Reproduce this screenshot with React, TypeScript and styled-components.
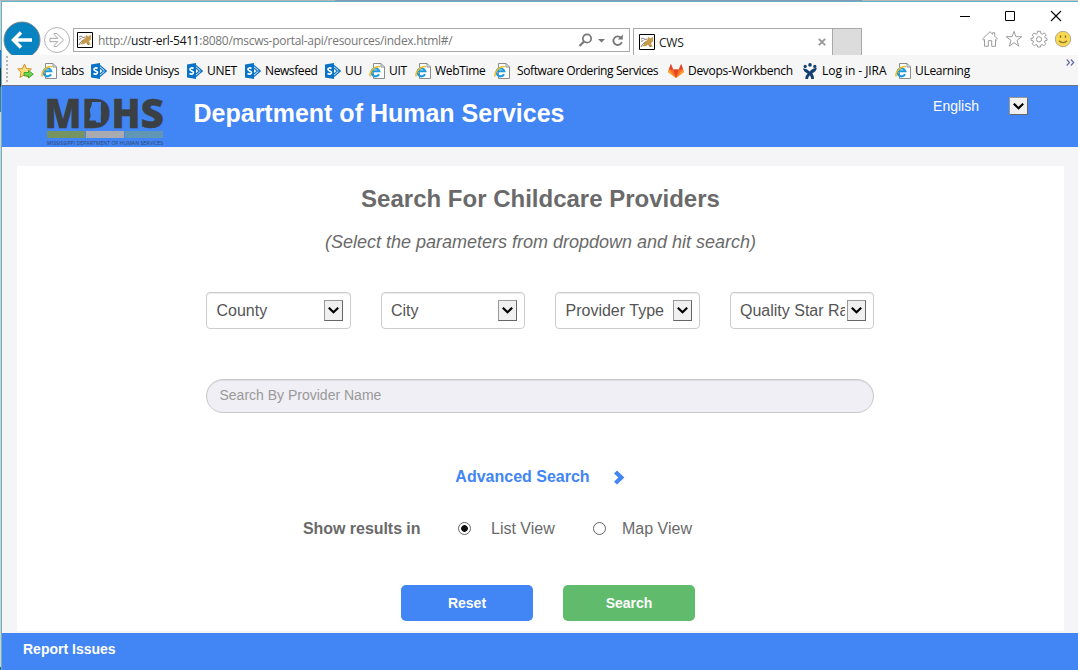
import React from 'react';
import styled, { createGlobalStyle } from 'styled-components';

const Global = createGlobalStyle`
  * { box-sizing: border-box; }
  body { margin: 0; overflow: hidden; font-family: "Liberation Sans", Arial, sans-serif; }
  svg { display: block; flex: none; }
`;

const Desktop = styled.div`
  width: 1078px;
  height: 670px;
  padding: 2px 0 0 2px;
  background:
    linear-gradient(#62b5c4, #62b5c4) 1px 1px / 1077px 1px no-repeat,
    linear-gradient(#62b5c4, #62b5c4) 1px 1px / 1px 669px no-repeat,
    linear-gradient(90deg, #aeb5ba 0 335px, #859ab5 335px 862px, #b5b5b5 862px 1000px, #c8c8c8 1000px) 0 0 / 1078px 1px no-repeat,
    linear-gradient(#ccd0d3 0 50px, #3c70d0 50px 68px, #333 68px 87px, #4774b5 87px 112px, #d3cfd0 112px 667px, #315aa0 667px) 0 0 / 1px 670px no-repeat;
`;
const BrowserWindow = styled.div`
  height: 668px;
  display: flex;
  flex-direction: column;
`;
const Chrome = styled.div`
  height: 53px;
  display: flex;
  background: #fff;
  overflow: hidden;
  font-family: "Open Sans", "Noto Sans", sans-serif;
`;
const NavButtons = styled.div`
  width: 71px;
  display: flex;
  padding-top: 19px;
`;
const AddressBar = styled.div`
  width: 557px;
  height: 24px;
  margin-top: 26px;
  border: 1px solid #a9a9a9;
  display: flex;
  align-items: center;
  padding: 0 5px 0 3px;
`;
const Url = styled.div`
  flex: 1;
  margin: 1px 0 0 5px;
  font-size: 12px;
  line-height: 22px;
  letter-spacing: -0.3px;
  color: #777;
  white-space: nowrap;
  b { font-weight: 400; color: #111; }
`;
const Tab = styled.div`
  width: 199px;
  height: 27px;
  margin: 26px 0 0 3px;
  border: solid #a9a9a9;
  border-width: 1px 0 0 1px;
  display: flex;
  align-items: center;
  padding: 0 6px 0 5px;
  font-size: 12px;
  color: #222;
`;
const TabTitle = styled.span`
  flex: 1;
  margin-left: 4px;
  letter-spacing: -0.2px;
`;
const NewTab = styled.div`
  width: 30px;
  height: 27px;
  margin-top: 26px;
  background: #dcdcdc;
  border: 1px solid #a9a9a9;
  border-bottom: 0;
`;
const WindowSide = styled.div`
  flex: 1;
  display: flex;
  flex-direction: column;
  align-items: flex-end;
`;
const WindowControls = styled.div`
  display: flex;
  gap: 33px;
  padding: 8px 16px 0 0;
`;
const Tools = styled.div`
  display: flex;
  gap: 6.5px;
  padding: 6px 6px 0 0;
`;

const Bookmarks = styled.div`
  height: 30px;
  background: #f6f6f6;
  display: flex;
  align-items: center;
  padding: 0 3px 0 4px;
  font-family: "Open Sans", "Noto Sans", sans-serif;
`;
const Grip = styled.div`
  width: 2px;
  height: 28px;
  margin-right: 9px;
  background: repeating-linear-gradient(#b4b4b4 0 2px, transparent 2px 4px);
`;
const Bookmark = styled.div<{ $w: number; $gap?: number; $ls?: number }>`
  width: ${p => p.$w}px;
  flex: none;
  display: flex;
  align-items: center;
  gap: ${p => p.$gap ?? 4}px;
  margin-top: 2px;
  font-size: 12px;
  line-height: 16px;
  letter-spacing: ${p => p.$ls ?? -0.3}px;
  white-space: nowrap;
  color: #000;
`;
const Overflow = styled.div`
  margin-left: auto;
  align-self: flex-start;
  padding-top: 4px;
`;

const Header = styled.header`
  height: 62px;
  border-top: 1px solid #687387;
  background: #4285f4;
  color: #fff;
  display: flex;
  padding-left: 44px;
`;
const Department = styled.h1`
  margin: 11px 0 0 28.5px;
  font-size: 25px;
  line-height: 32px;
  font-weight: 700;
  white-space: nowrap;
`;
const Language = styled.div`
  margin: 11px 50px 0 auto;
  display: flex;
  gap: 30px;
  font-size: 14px;
  line-height: 19px;
`;

const Page = styled.main`
  flex: 1;
  background: #f5f5f8;
  padding: 19px 14px 2px 15px;
`;
const Card = styled.section`
  height: 465px;
  background: #fff;
  display: flex;
  flex-direction: column;
  align-items: center;
  color: #6a6a6a;
`;
const Title = styled.h2`
  margin: 17px 0 0;
  font-size: 24px;
  line-height: 32px;
  font-weight: 700;
`;
const Subtitle = styled.p`
  margin: 15px 0 0;
  font-size: 18px;
  line-height: 24px;
  font-style: italic;
`;
const Filters = styled.div`
  width: 668px;
  margin: 38px 1px 0 0;
  display: grid;
  grid-template-columns: repeat(4, 1fr);
  gap: 30px;
`;
const Select = styled.div`
  height: 37px;
  min-width: 0;
  border: 1px solid #ccc;
  border-radius: 4px;
  box-shadow: inset 0 1px 1px rgba(0, 0, 0, 0.075);
  display: flex;
  align-items: center;
  padding: 0 7px 0 9.5px;
  font-size: 16px;
  color: #555;
`;
const SelectText = styled.span`
  flex: 1;
  overflow: hidden;
  white-space: nowrap;
  margin-right: 2px;
`;
const ArrowBox = styled.span<{ $h: number }>`
  width: 19px;
  height: ${p => p.$h}px;
  flex: none;
  display: flex;
  align-items: center;
  justify-content: center;
  background: #f0f0f0;
  border: 1px solid #777;
  border-color: #999 #666 #666 #999;
`;
const SearchField = styled.input`
  width: 668px;
  height: 34px;
  margin: 50px 1px 0 0;
  padding: 0 12px 2px 12.5px;
  border: 1px solid #c8c8ca;
  border-radius: 17px;
  background: #f0eff5;
  box-shadow: inset 0 1px 1px rgba(0, 0, 0, 0.075);
  font: 14px "Liberation Sans", Arial, sans-serif;
  &::placeholder { color: #999; opacity: 1; }
`;
const Advanced = styled.div`
  margin: 53px 1px 0 0;
  display: flex;
  align-items: center;
  gap: 23px;
  font-size: 16px;
  line-height: 22px;
  font-weight: 700;
  color: #4285f4;
`;
const Results = styled.div`
  align-self: flex-start;
  margin: 30px 0 0 286px;
  display: flex;
  align-items: center;
  font-size: 16px;
  line-height: 22px;
`;
const ResultsLabel = styled.strong`
  width: 155px;
  letter-spacing: -0.05px;
`;
const Option = styled.label<{ $w: number; $gap: number }>`
  width: ${p => p.$w}px;
  display: flex;
  align-items: center;
  gap: ${p => p.$gap}px;
  white-space: nowrap;
`;
const Radio = styled.span<{ $on?: boolean }>`
  width: 13px;
  height: 13px;
  flex: none;
  margin-top: -2px;
  border: 1px solid #666;
  border-radius: 50%;
  background: ${p => (p.$on ? 'radial-gradient(circle, #111 0 3px, #fff 3.7px)' : '#fff')};
`;
const Actions = styled.div`
  width: 294px;
  margin: 45px 0 0 15px;
  display: flex;
  gap: 30px;
`;
const Button = styled.button<{ $green?: boolean }>`
  width: 132px;
  height: 36px;
  padding: 0;
  border: 0;
  border-radius: 5px;
  background: ${p => (p.$green ? '#60bb6d' : '#4285f4')};
  color: #fff;
  font: bold 14px "Liberation Sans", Arial, sans-serif;
`;
const Footer = styled.footer`
  height: 37px;
  background: #4285f4;
  color: #fff;
  padding: 6px 21px;
  font-size: 14px;
  line-height: 20px;
  font-weight: 700;
`;

const Back = () => (
  <svg width="40" height="38" viewBox="0 0 40 38">
    <circle cx="20" cy="19" r="18" fill="#0783c2" stroke="#78868e" />
    <path d="M30 19H12M19 11.5L11.5 19L19 26.5" fill="none" stroke="#fff" strokeWidth="3.5" />
  </svg>
);
const Forward = () => (
  <svg width="30" height="38" viewBox="0 0 30 38">
    <circle cx="15" cy="19" r="12.5" fill="#fff" stroke="#b4b4b4" />
    <path d="M8 17.3H15.8L12.2 13.7V12.5H14.8L21.6 19L14.8 25.5H12.2V24.3L15.8 20.7H8Z" fill="none" stroke="#a5a5a5" />
  </svg>
);
const Tomcat = () => (
  <svg width="16" height="16" viewBox="0 0 16 16">
    <path d="M.5.5h15v15H.5z" fill="#fff" stroke="#000" />
    <path d="M4.5 8.5L8.5 6L9.3 2.8L11.2 4.6L14 2.8L13.9 7.4L12 9.2L13.7 12.7H10.8L9 10.8L6.5 12.3H3L5 10.3Z" fill="#c79a4b" />
    <path d="M2 5L4 4L6 5.5L8.5 5M2 7.5L4.5 6.3M5.5 8.8L3 11L2 13M10 11.5L12 12.8" fill="none" stroke="#777067" strokeWidth=".9" />
  </svg>
);
const AddressIcons = () => (
  <svg width="46" height="16" viewBox="0 0 46 16" fill="none" stroke="#777">
    <circle cx="9" cy="6.5" r="4.2" strokeWidth="1.7" />
    <path d="M6 9.5L1.5 14" strokeWidth="2.2" />
    <path d="M20 7H27L23.5 10.5Z" fill="#777" stroke="none" />
    <path d="M43 5.9A4.3 4.3 0 1 0 43.8 10" strokeWidth="1.8" />
    <path d="M44.8 2.5V7.5H39.8Z" fill="#777" stroke="none" />
  </svg>
);
const CloseTab = () => (
  <svg width="8" height="8" viewBox="0 0 8 8"><path d="M.8.8L7.2 7.2M7.2.8L.8 7.2" stroke="#999" strokeWidth="1.9" /></svg>
);
const Minimize = () => <svg width="12" height="14"><path d="M0 6.5H10" stroke="#000" /></svg>;
const Maximize = () => <svg width="12" height="14"><path d="M.5 1.5H9.5V10.5H.5Z" fill="none" stroke="#000" /></svg>;
const CloseWindow = () => <svg width="12" height="14"><path d="M1 1L11 11M11 1L1 11" stroke="#000" strokeWidth="1.1" /></svg>;

const Home = () => (
  <svg width="18" height="18" viewBox="0 0 18 18" fill="none" stroke="#9c9c9c">
    <path d="M1.5 9L9 1.7L11.7 4.3V2.7H13.7V6.2L16.5 9L15.3 10.2L14.5 9.5V16.3H10.7V10.7H7.3V16.3H3.5V9.5L2.7 10.2Z" />
  </svg>
);
const Star = () => (
  <svg width="18" height="18" viewBox="0 0 18 18"><path d="M9 1.3L10.9 6.7H16.8L12 10.4L13.8 16.2L9 12.7L4.2 16.2L6 10.4L1.2 6.7H7.1Z" fill="none" stroke="#9c9c9c" /></svg>
);
const Gear = () => (
  <svg width="18" height="18" viewBox="0 0 18 18" fill="none" stroke="#9c9c9c">
    <path d="M7.5 1.3H10.5L10.9 3.6L12.3 4.2L14.2 2.9L16.1 4.9L14.8 6.7L15.3 8L17 8.5V10.3L15 10.7L14.5 12L15.8 13.8L13.8 15.8L12 14.5L10.8 15L10.4 17H7.6L7.2 15L6 14.5L4.2 15.8L2.2 13.8L3.5 12L3 10.7L1 10.3V8.5L3 8L3.5 6.7L2.2 4.9L4 2.9L5.9 4.2L7.1 3.6Z" />
    <circle cx="9" cy="9.3" r="2.6" />
  </svg>
);
const Smile = () => (
  <svg width="18" height="18" viewBox="0 0 18 18">
    <circle cx="9" cy="9" r="7.7" fill="#fbd84e" stroke="#b3ab94" />
    <path d="M6.5 5.2V8M11.5 5.2V8M5 10.7Q9 14.6 13 10.7" fill="none" stroke="#8c7838" strokeWidth="1.3" />
  </svg>
);

const FavStar = () => (
  <svg width="17" height="16" viewBox="0 0 17 16">
    <path d="M7.5 1L9.5 5.5L14.5 6L10.8 9.2L12 14.5L7.5 11.8L3 14.5L4 9.2L.7 6L5.5 5.5Z" fill="#ffdc78" stroke="#d1902c" />
    <path d="M7 9.5H11.5V7.4L16.3 11.2L11.5 15V12.9H7Z" fill="#6fd24f" stroke="#2b9c20" strokeWidth=".8" />
  </svg>
);
const IePage = () => (
  <svg width="16" height="16" viewBox="0 0 16 16">
    <path d="M4.5.5H12L15.5 4V15.5H4.5Z" fill="#fff" stroke="#8c8c8c" />
    <path d="M12 .5V4H15.5" fill="none" stroke="#8c8c8c" />
    <path d="M10 11.2A4 4 0 1 1 10.3 8.3H3" fill="none" stroke="#1e9bdc" strokeWidth="2.1" />
    <path d="M1.2 13.5C-.4 9.3 6 2.5 10.8 3.8" fill="none" stroke="#f0bd22" strokeWidth="1.5" />
  </svg>
);
const SharePoint = () => (
  <svg width="16" height="16" viewBox="0 0 16 16">
    <path d="M9 2.5L15.3 8L9 13.5M9 5L12.3 8L9 11M12.3 8H15" fill="none" stroke="#1677c5" strokeWidth="1.2" />
    <path d="M0 1.5L9 0V16L0 14.5Z" fill="#0872c6" />
    <path d="M6.5 5.5C5.2 4.5 2.9 4.8 2.9 6.2C2.9 8 6.5 7.8 6.5 9.6C6.5 11.4 3.9 11.5 2.5 10.5" fill="none" stroke="#fff" strokeWidth="1.6" />
  </svg>
);
const Fox = () => (
  <svg width="16" height="16" viewBox="0 0 16 16">
    <path d="M8 15L0 9L2.8 1L5.2 6.5H10.8L13.2 1L16 9Z" fill="#fc6d26" />
    <path d="M8 15L5.2 6.5H10.8Z" fill="#e24329" />
    <path d="M0 9L1 6.5L8 15ZM16 9L15 6.5L8 15Z" fill="#fca326" />
    <path d="M1 6.5L2.8 1L5.2 6.5ZM15 6.5L13.2 1L10.8 6.5Z" fill="#e24329" />
  </svg>
);
const Jira = () => (
  <svg width="16" height="16" viewBox="0 0 16 16" fill="#123f70">
    <circle cx="3.2" cy="3.4" r="1.6" /><circle cx="8" cy="1.9" r="1.8" /><circle cx="12.8" cy="3.4" r="1.6" />
    <path d="M1 5.2Q5 5.8 7.8 8.4Q10 5.4 14.8 4.8Q14.4 8.8 10.3 10.2Q12 12.5 12 16H9.2Q9.2 13.8 7.8 12.2Q6.2 13.8 6 16H3.2Q3.2 12.5 5.6 10.4Q1.8 9 1 5.2Z" />
  </svg>
);
const DoubleChevron = () => (
  <svg width="9" height="7" viewBox="0 0 9 7"><path d="M.7.5L3.5 3.5L.7 6.5M4.9.5L7.7 3.5L4.9 6.5" fill="none" stroke="#6269a5" strokeWidth="1.2" /></svg>
);
const Chevron = () => (
  <svg width="11" height="7" viewBox="0 0 11 7"><path d="M.8.7L5.5 5.3L10.2.7" fill="none" stroke="#000" strokeWidth="2.1" /></svg>
);
const Arrow = () => (
  <svg width="12" height="15" viewBox="0 0 12 15"><path d="M1 3.4L4 .6L11.4 7.6L4 14.6L1 11.8L5.4 7.6Z" fill="#4285f4" /></svg>
);
const LogoSvg = styled.svg`
  overflow: visible;
  font-family: "Open Sans", sans-serif;
`;
const Logo = () => (
  <LogoSvg width="119" height="61" viewBox="0 0 119 61">
    <g fontSize="41" fontWeight="800" fill="#3a4043" stroke="#3a4043" strokeWidth=".3">
      <text x="-1.6" y="41.5" textLength="37" lengthAdjust="spacingAndGlyphs">M</text>
      <text x="35.4" y="41.5" textLength="30" lengthAdjust="spacingAndGlyphs">D</text>
      <text x="65.4" y="41.5" textLength="29" lengthAdjust="spacingAndGlyphs">H</text>
      <text x="94.6" y="41.5" textLength="23.5" lengthAdjust="spacingAndGlyphs">S</text>
    </g>
    <path d="M44 17H51V36H44Z" fill="#3a4043" />
    <path d="M46 16H55L54.5 30L55 36.5H50.5L49.5 34.5H43L44.7 30L43.8 24L45.5 19.5Z" fill="#4285f4" />
    <path d="M1 45H39V52H1Z" fill="#75945f" />
    <path d="M40 45H78V52H40Z" fill="#aaabb1" />
    <path d="M79 45H117V52H79Z" fill="#6196b4" />
    <text x="1" y="58.7" fontSize="5.3" fontWeight="400" fill="#2f4468" textLength="116" lengthAdjust="spacingAndGlyphs">MISSISSIPPI DEPARTMENT OF HUMAN SERVICES</text>
  </LogoSvg>
);

const bookmarks = [
  { label: 'tabs', w: 50, icon: IePage },
  { label: 'Inside Unisys', w: 96, ls: -0.4, icon: SharePoint },
  { label: 'UNET', w: 58, icon: SharePoint },
  { label: 'Newsfeed', w: 80, ls: -0.4, icon: SharePoint },
  { label: 'UU', w: 44, icon: SharePoint },
  { label: 'UIT', w: 46, icon: IePage },
  { label: 'WebTime', w: 79, icon: IePage },
  { label: 'Software Ordering Services', w: 174, gap: 7, ls: -0.4, icon: IePage },
  { label: 'Devops-Workbench', w: 134, ls: -0.3, icon: Fox },
  { label: 'Log in - JIRA', w: 93, ls: -0.05, icon: Jira },
  { label: 'ULearning', w: 80, icon: IePage },
];

export default function App() {
  return (
    <>
      <Global />
      <Desktop>
        <BrowserWindow>
          <Chrome>
            <NavButtons><Back /><Forward /></NavButtons>
            <AddressBar>
              <Tomcat />
              <Url>http://<b>ustr-erl-5411</b>:8080/mscws-portal-api/resources/index.html#/</Url>
              <AddressIcons />
            </AddressBar>
            <Tab><Tomcat /><TabTitle>CWS</TabTitle><CloseTab /></Tab>
            <NewTab />
            <WindowSide>
              <WindowControls><Minimize /><Maximize /><CloseWindow /></WindowControls>
              <Tools><Home /><Star /><Gear /><Smile /></Tools>
            </WindowSide>
          </Chrome>
          <Bookmarks>
            <Grip />
            <Bookmark $w={24}><FavStar /></Bookmark>
            {bookmarks.map(({ label, w, gap, ls, icon: Icon }) => (
              <Bookmark key={label} $w={w} $gap={gap} $ls={ls}><Icon />{label}</Bookmark>
            ))}
            <Overflow><DoubleChevron /></Overflow>
          </Bookmarks>
          <Header>
            <Logo />
            <Department>Department of Human Services</Department>
            <Language>English<ArrowBox $h={18}><Chevron /></ArrowBox></Language>
          </Header>
          <Page>
            <Card>
              <Title>Search For Childcare Providers</Title>
              <Subtitle>(Select the parameters from dropdown and hit search)</Subtitle>
              <Filters>
                {['County', 'City', 'Provider Type', 'Quality Star Rating'].map(name => (
                  <Select key={name}><SelectText>{name}</SelectText><ArrowBox $h={21}><Chevron /></ArrowBox></Select>
                ))}
              </Filters>
              <SearchField placeholder="Search By Provider Name" />
              <Advanced>Advanced Search<Arrow /></Advanced>
              <Results>
                <ResultsLabel>Show results in</ResultsLabel>
                <Option $w={135} $gap={20}><Radio $on />List View</Option>
                <Option $w={110} $gap={16}><Radio />Map View</Option>
              </Results>
              <Actions><Button>Reset</Button><Button $green>Search</Button></Actions>
            </Card>
          </Page>
          <Footer>Report Issues</Footer>
        </BrowserWindow>
      </Desktop>
    </>
  );
}
